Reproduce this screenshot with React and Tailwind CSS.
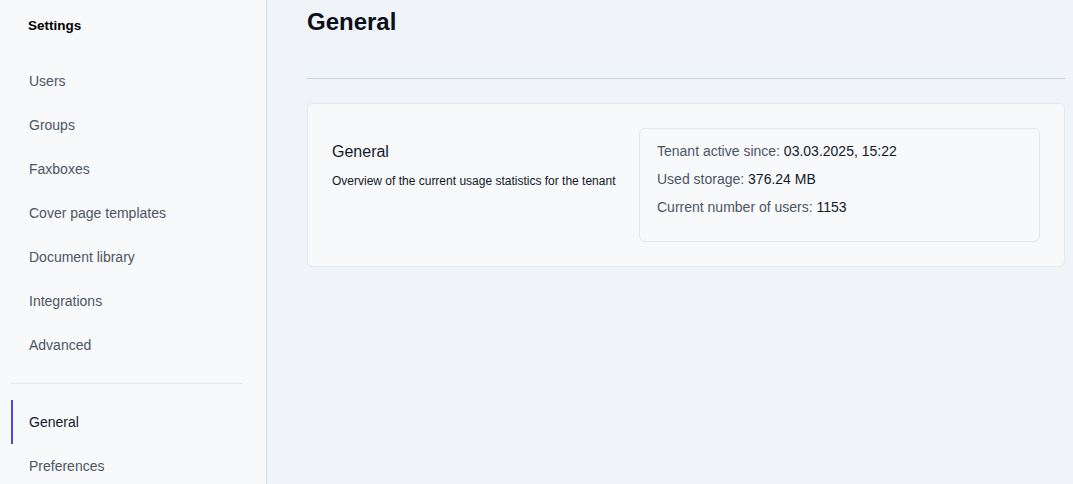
const navTop = ['Users', 'Groups', 'Faxboxes', 'Cover page templates', 'Document library', 'Integrations', 'Advanced'];
const navBottom = ['General', 'Preferences'];

function NavItem({ label, active }) {
  return (
    <div
      className={`h-[44px] shrink-0 flex items-center pl-[16px] border-l-2 text-[14px] ${
        active ? 'border-[#4f46e5] text-[#111827]' : 'border-transparent text-[#4b5563]'
      }`}
    >
      {label}
    </div>
  );
}

function Stat({ label, value }) {
  return (
    <div className="text-[14px] leading-[20px]">
      <span className="text-[#4b5563]">{label}: </span>
      <span className="text-[#111827]">{value}</span>
    </div>
  );
}

export default function App() {
  return (
    <div className="flex h-[484px] overflow-hidden bg-[#f0f3f8]" style={{ fontFamily: '"Liberation Sans", Arial, sans-serif' }}>
      <aside className="w-[267px] shrink-0 bg-[#f8f9fb] border-r border-[#d5dce7] flex flex-col overflow-hidden">
        <div className="h-[59px] shrink-0 pl-[28px] pt-[17px] text-[13.5px] font-bold text-black leading-[18px]">Settings</div>
        <nav className="shrink-0 pl-[11px] pr-[24px]">
          {navTop.map((l) => (
            <NavItem key={l} label={l} />
          ))}
          <div className="mt-[16px] mb-[16px] border-t border-[#e3e7ee]" />
          {navBottom.map((l) => (
            <NavItem key={l} label={l} active={l === 'General'} />
          ))}
        </nav>
      </aside>

      <main className="flex-1 pl-[40px] pr-[8px]">
        <h1 className="pt-[8px] text-[24px] leading-[28px] font-bold text-[#0b0f19]">General</h1>
        <div className="mt-[42px] border-t border-[#cbd5e1]" />
        <section className="mt-[24px] rounded-md border border-[#e2e8f0] bg-[#f8f9fb] p-[24px] flex">
          <div className="w-[307px] shrink-0 pt-[12px]">
            <h2 className="text-[16px] leading-[24px] text-[#111827]">General</h2>
            <p className="mt-[9px] text-[12px] leading-[16px] text-[#111827]">
              Overview of the current usage statistics for the tenant
            </p>
          </div>
          <div className="flex-1 rounded-md border border-[#e2e8f0] bg-[#f8f9fb] pl-[17px] pt-[12px] pb-[24px] flex flex-col gap-[8px]">
            <Stat label="Tenant active since" value="03.03.2025, 15:22" />
            <Stat label="Used storage" value="376.24 MB" />
            <Stat label="Current number of users" value="1153" />
          </div>
        </section>
      </main>
    </div>
  );
}
